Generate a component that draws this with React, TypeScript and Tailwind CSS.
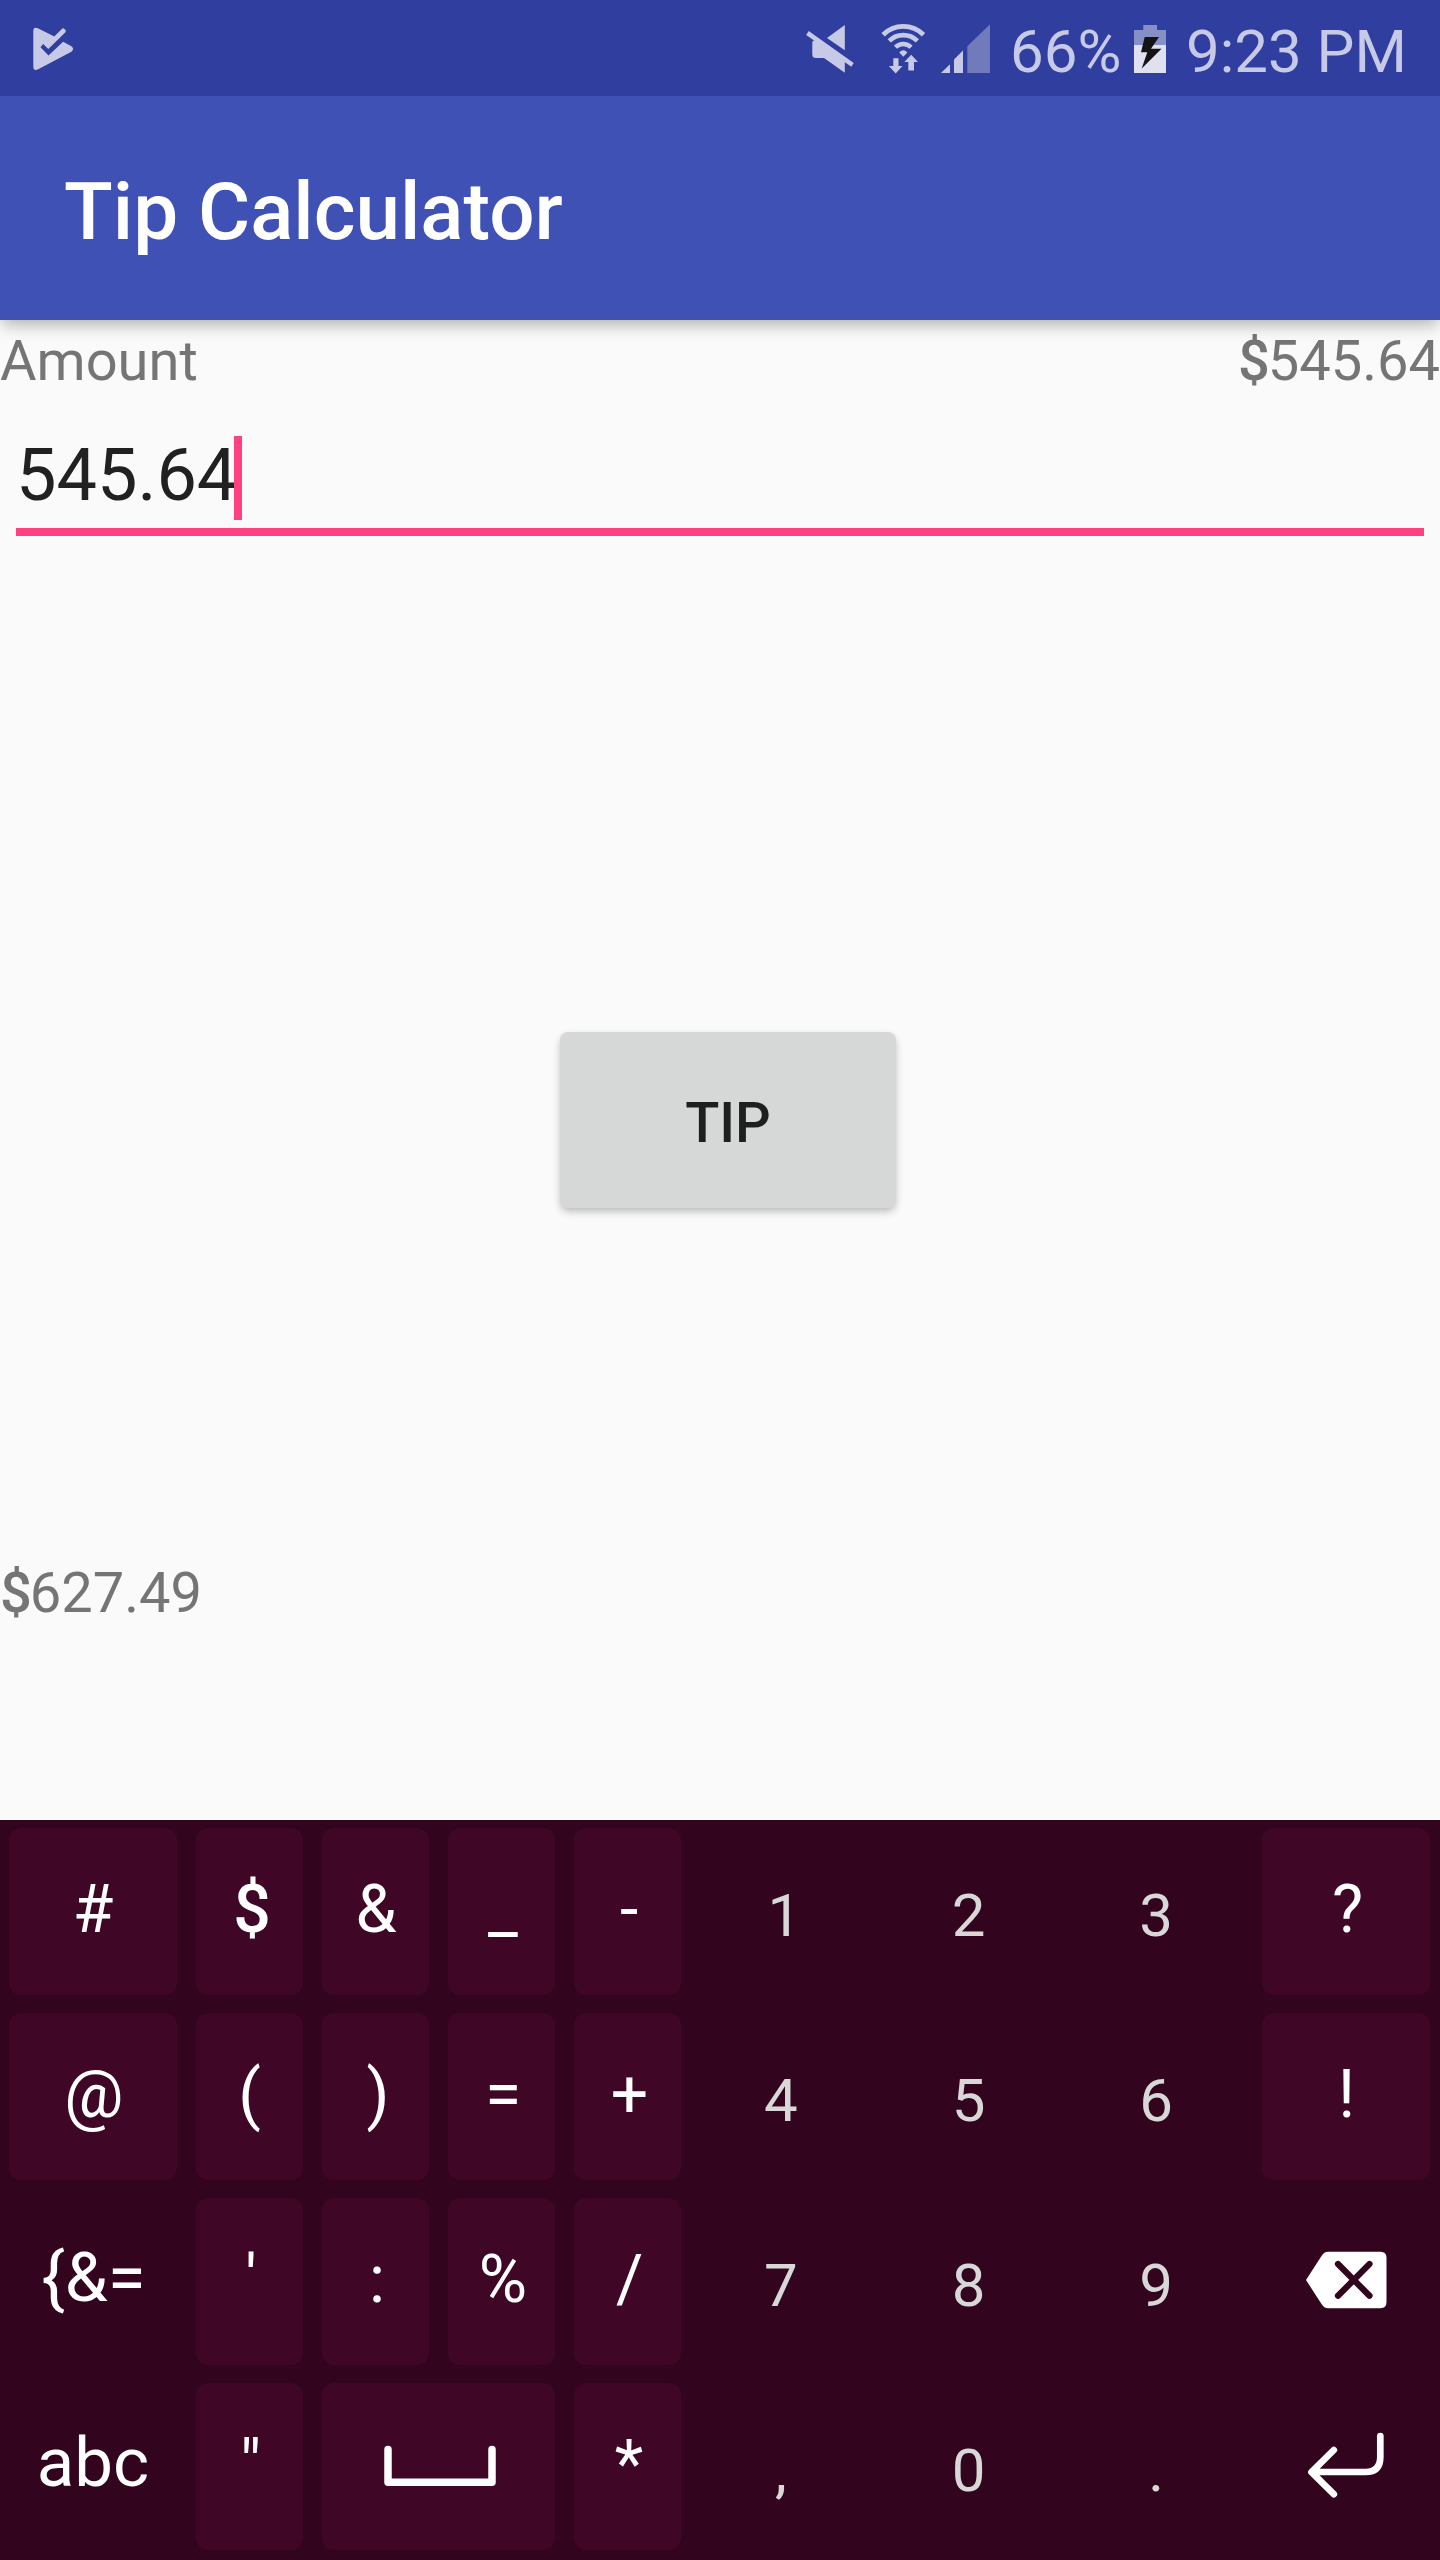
import React from "react";

type KeyDef = { label: React.ReactNode; kind?: "fn"; span?: boolean; name?: string; nudge?: string };

function PlayCheckIcon() {
  return (
    <svg viewBox="32 26 42 46" className="h-[46px] w-[42px]" fill="#c7cae6">
      <path d="M33.3 31Q33.3 26.600 37.800 28.200L54.300 36.600L61.800 29Q63.100 27.600 64.400 29L65.400 30Q66.300 31.200 65.200 32.400L48.300 49L43.200 43.900L40.500 47.200L48.500 55.600L63.100 41.800L71.400 46.300Q74.800 49 71.400 51.700L38.200 69.300Q33.300 71.400 33.300 66.500Z" />
    </svg>
  );
}

function MuteIcon() {
  return (
    <svg viewBox="806 24 48 50" className="h-[50px] w-[48px]" fill="#c7cae6">
      <path d="M808.700 31L853.700 63L851.300 66.800L806.200 35Z" />
      <path d="M844.800 25V50.300L827 38Z" />
      <path d="M815 40.300Q812.300 40.500 812.300 43V54.500Q812.300 58 816 58H824L844.800 72.700V61Z" />
    </svg>
  );
}

function WifiIcon() {
  return (
    <svg viewBox="881 23 45 51" className="h-[51px] w-[45px]">
      <g fill="none" stroke="#c7cae6">
        <path d="M883.1 34.700A28.600 28.600 0 0 1 923.500 34.700" strokeWidth="4.800" />
        <path d="M889.200 40.900A20 20 0 0 1 917.400 40.900" strokeWidth="4.600" />
        <path d="M895.500 47.200A11.100 11.100 0 0 1 911.100 47.200" strokeWidth="4.400" />
      </g>
      <g fill="#c7cae6">
        <path d="M899.200 52.500Q903.300 47.800 907.400 52.500L903.300 56.800Z" />
        <path d="M893.300 58.300H898.500V66H902.500L895.700 73.600L888.900 66H893.300Z" />
        <path d="M911.200 54.800L918 62H914V70.500H908.300V62H904.300Z" />
      </g>
    </svg>
  );
}

function SignalIcon() {
  return (
    <svg viewBox="941 24 49 49" className="h-[49px] w-[49px]" fill="#c7cae6">
      <path d="M941 73L950 64.200V73Z" />
      <path d="M954 73V59.400L963 50.600V73Z" />
      <path d="M967.300 73V46.200L990 24.300V73Z" fill="#717abb" />
    </svg>
  );
}

function BatteryIcon() {
  return (
    <svg viewBox="1134 25 32 48" className="h-[48px] w-[32px]">
      <path d="M1134 45V30H1143.300V25H1157V30H1166V45Z" fill="#878fc7" />
      <path d="M1134 45H1166V73H1134Z" fill="#dfe0f0" />
      <path d="M1144.700 37H1159L1151 48.700H1161.500L1141.700 68.500L1147.300 52.200H1141Z" fill="#141414" />
    </svg>
  );
}

function SpaceIcon() {
  return (
    <svg viewBox="384 2447 112 42" className="mt-[2px] h-[42px] w-[112px]">
      <path d="M388 2451.500V2484.300H492V2451.500" fill="none" stroke="#fff" strokeWidth="7.500" strokeLinecap="round" strokeLinejoin="round" />
    </svg>
  );
}

function BackspaceIcon() {
  return (
    <svg viewBox="1306 2251 81 58" className="h-[58px] w-[81px]">
      <path d="M1306 2280L1321.500 2256Q1324 2251.700 1328 2251.700H1380.500Q1386.500 2251.700 1386.500 2257.700V2302Q1386.500 2308.200 1380.500 2308.200H1328Q1324 2308.200 1321.500 2304Z" fill="#fff" />
      <path d="M1338 2264L1369.500 2295.800M1369.500 2264L1338 2295.800" stroke="#33041e" strokeWidth="6.200" strokeLinecap="round" />
    </svg>
  );
}

function EnterIcon() {
  return (
    <svg viewBox="1308 2432 76 66" className="h-[66px] w-[76px]">
      <path d="M1380.300 2436V2457Q1380.300 2472 1365.500 2472H1312M1333.800 2450L1311.500 2472.200L1333.800 2494.200" fill="none" stroke="#fff" strokeWidth="6.700" strokeLinecap="round" strokeLinejoin="round" />
    </svg>
  );
}

const symbols: KeyDef[] = [
  { label: "#", nudge: "pl-0" },
  { label: "$", nudge: "pl-[5px] font-medium" },
  { label: "&", nudge: "pl-[1px]" },
  { label: "_" },
  { label: "-" },
  { label: "@", nudge: "pl-[2px]" },
  { label: "(", nudge: "pl-0" },
  { label: ")", nudge: "pl-[5px]" },
  { label: "=" },
  { label: "+", nudge: "pl-[4px]" },
  { label: "{&=", kind: "fn", nudge: "pl-[1px]" },
  { label: "'" },
  { label: ":" },
  { label: "%" },
  { label: "/", nudge: "pl-[4px]" },
  { label: "abc", kind: "fn" },
  { label: '"', nudge: "pl-[2px]" },
  { label: <SpaceIcon />, span: true, name: "Space", nudge: "pl-[3px]" },
  { label: "*" },
];

const digits = ["1", "2", "3", "4", "5", "6", "7", "8", "9", ",", "0", "."];

function SymbolKey({ label, kind, span, name, nudge = "pl-[3px]" }: KeyDef) {
  const base = "flex items-center justify-center whitespace-nowrap text-white";
  const look =
    kind === "fn"
      ? "pb-[8px] text-[69px]"
      : "rounded-[12px] bg-[#3f0626] pb-[3px] text-[66px]";
  const offset = kind === "fn" && nudge === "pl-[3px]" ? "" : nudge;
  return (
    <button aria-label={name} className={`${base} ${look} ${offset} ${span ? "col-span-2" : ""}`}>
      {label}
    </button>
  );
}

function Keyboard() {
  return (
    <section className="flex h-[740px] bg-[#33041e] pt-[8px] pl-[9px] leading-none">
      <div className="grid h-[722px] grid-cols-[168px_107px_107px_107px_107px] grid-rows-4 gap-x-[19px] gap-y-[18px]">
        {symbols.map((k, i) => (
          <SymbolKey key={i} {...k} />
        ))}
      </div>
      <div className="ml-[6px] grid h-[722px] w-[563px] grid-cols-3 grid-rows-4 gap-y-[18px]">
        {digits.map((d) => (
          <button
            key={d}
            className={`flex items-center justify-center pt-[8px] text-[60px] text-[#d8d8d8] ${d === "1" ? "pl-[7px]" : ""}`}
          >
            {d}
          </button>
        ))}
      </div>
      <div className="ml-[12px] grid h-[722px] w-[168px] grid-rows-4 gap-y-[18px]">
        <SymbolKey label="?" />
        <SymbolKey label="!" nudge="pl-[1px]" />
        <button aria-label="Backspace" className="flex items-center justify-center pb-[3px]">
          <BackspaceIcon />
        </button>
        <button aria-label="Enter" className="flex items-center justify-center pb-[3px]">
          <EnterIcon />
        </button>
      </div>
    </section>
  );
}

function Money({ value }: { value: string }) {
  return (
    <span>
      <span className="-mr-[2px] font-medium">$</span>
      {value}
    </span>
  );
}

export default function App() {
  return (
    <div className="flex h-[2560px] w-[1440px] flex-col overflow-hidden bg-[#fafafa] font-['Roboto',sans-serif]">
      <header className="relative z-10 shadow-[0_6px_16px_-2px_rgba(0,0,0,0.32)]">
        <div className="flex h-[96px] items-start bg-[#303f9f] pl-[32px] text-[60px] leading-[104px] text-[#c7cae6]">
          <div className="mt-[26px]"><PlayCheckIcon /></div>
          <div className="mt-[24px] ml-auto"><MuteIcon /></div>
          <div className="mt-[23px] ml-[27px]"><WifiIcon /></div>
          <div className="mt-[24px] ml-[15px]"><SignalIcon /></div>
          <span className="ml-[20px] w-[124px] whitespace-nowrap">66%</span>
          <div className="mt-[25px]"><BatteryIcon /></div>
          <span className="ml-[20px] w-[254px] whitespace-nowrap">9:23 PM</span>
        </div>
        <div className="flex h-[224px] items-center bg-[#3f51b5] pt-[7px] pl-[64px]">
          <h1 className="text-[80px] leading-none font-medium text-white">Tip Calculator</h1>
        </div>
      </header>

      <main className="flex flex-1 flex-col">
        <div className="flex justify-between pt-[8px] text-[56px] leading-[66px] text-[#757575]">
          <span>Amount</span>
          <Money value="545.64" />
        </div>
        <div className="mx-4 mt-[42px] flex h-[100px] items-start border-b-8 border-[#ff4081] text-[72px] leading-[79px] text-[#212121]">
          <span className="w-[218px]">545.64</span>
          <span className="z-10 h-[84px] w-[8px] bg-[#ff4081]" />
        </div>
        <button className="mt-[496px] ml-[560px] flex h-[176px] w-[336px] items-center justify-center rounded-[8px] bg-[#d6d7d7] pt-[5px] text-[56px] leading-none font-medium text-[#1e1f1f] shadow-[0_4px_8px_-1px_rgba(0,0,0,0.28)]">
          TIP
        </button>
        <div className="mt-[352px] text-[56px] leading-[66px] text-[#757575]">
          <Money value="627.49" />
        </div>
      </main>

      <Keyboard />
    </div>
  );
}
